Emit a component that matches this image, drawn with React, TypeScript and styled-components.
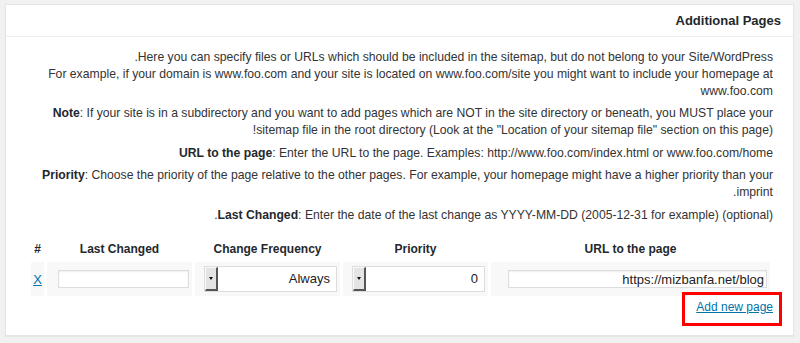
import styled, { createGlobalStyle } from "styled-components";

const GlobalStyle = createGlobalStyle`
  html, body {
    margin: 0;
    padding: 0;
    background: #f1f1f1;
    font-family: "Liberation Sans", Arial, sans-serif;
    color: #333;
  }
`;

const Page = styled.div`
  padding: 4px 6px 7px 5px;
`;

const Panel = styled.div`
  direction: rtl;
  background: #fff;
  border: 1px solid #e5e5e5;
  box-shadow: 0 1px 1px rgba(0, 0, 0, 0.04);
`;

const PanelTitle = styled.h3`
  margin: 0;
  padding: 0 12px;
  height: 31px;
  line-height: 31px;
  font-size: 13px;
  font-weight: bold;
  color: #23282d;
  border-bottom: 1px solid #eee;
`;

const PanelBody = styled.div`
  padding: 11.5px 20px 19px 22px;
`;

const Text = styled.p`
  margin: 0 0 5.5px;
  font-size: 12.2px;
  line-height: 17px;
  color: #333;

  strong {
    color: #23282d;
  }
`;

const PagesTable = styled.table`
  width: 745px;
  margin-top: 12.5px;
  table-layout: fixed;
  border-spacing: 3px;
`;

const HeadCell = styled.th`
  height: 20px;
  padding: 0;
  font-size: 12px;
  font-weight: bold;
  color: #23282d;
  text-align: center;
`;

const Cell = styled.td<{ $center?: boolean }>`
  height: 34px;
  padding: 0 ${(p) => (p.$center ? 0 : 3)}px 0 0;
  background: #f8f8f8;
  text-align: ${(p) => (p.$center ? "center" : "right")};
  vertical-align: middle;
  font-size: 13px;
`;

const TextInput = styled.input<{ $width: number }>`
  direction: rtl;
  box-sizing: border-box;
  width: ${(p) => p.$width}px;
  height: 18px;
  margin: 0;
  padding: 0 2px;
  border: 1px solid #ddd;
  box-shadow: inset 0 1px 2px rgba(0, 0, 0, 0.07);
  font-family: "Liberation Sans", Arial, sans-serif;
  font-size: 13px;
  color: #222;
  vertical-align: middle;
  outline: none;
`;

const SelectBox = styled.div`
  box-sizing: border-box;
  display: inline-flex;
  flex-direction: row-reverse;
  align-items: stretch;
  width: 133px;
  height: 26px;
  border: 1px solid #ddd;
  background: #fff;
  vertical-align: middle;
`;

const SelectArrow = styled.span`
  box-sizing: border-box;
  width: 13px;
  display: flex;
  align-items: center;
  justify-content: center;
  background: #e4e4e4;
  border-style: solid;
  border-width: 1px 2px 2px 1px;
  border-color: #fafafa #555 #555 #fafafa;

  &::before {
    content: "";
    border-left: 2.5px solid transparent;
    border-right: 2.5px solid transparent;
    border-top: 3px solid #111;
  }
`;

const SelectValue = styled.span`
  flex: 1;
  padding-right: 6px;
  line-height: 24px;
  font-size: 13px;
  color: #222;
  text-align: right;
`;

const Link = styled.a`
  color: #0073aa;
  text-decoration: underline;
  cursor: pointer;
`;

const RemoveLink = styled(Link)`
  font-size: 13px;
`;

const AddRow = styled.div`
  line-height: 17px;
  font-size: 12px;
`;

const Highlight = styled.span`
  position: relative;
  display: inline-block;

  &::after {
    content: "";
    position: absolute;
    top: -7px;
    bottom: -10px;
    left: -14px;
    right: -9px;
    border: 3px solid #ff0000;
    pointer-events: none;
  }
`;

function Select({ value }: { value: string }) {
  return (
    <SelectBox>
      <SelectArrow />
      <SelectValue>{value}</SelectValue>
    </SelectBox>
  );
}

export default function App() {
  return (
    <Page>
      <GlobalStyle />
      <Panel>
        <PanelTitle>Additional Pages</PanelTitle>
        <PanelBody>
          <Text>
            Here you can specify files or URLs which should be included in the
            sitemap, but do not belong to your Site/WordPress.
            <br />
            For example, if your domain is www.foo.com and your site is located
            on www.foo.com/site you might want to include your homepage at
            www.foo.com
          </Text>
          <Text>
            <strong>Note</strong>: If your site is in a subdirectory and you
            want to add pages which are NOT in the site directory or beneath,
            you MUST place your sitemap file in the root directory (Look at the
            "Location of your sitemap file" section on this page)!
          </Text>
          <Text>
            <strong>URL to the page</strong>: Enter the URL to the page.
            Examples: http://www.foo.com/index.html or www.foo.com/home
          </Text>
          <Text>
            <strong>Priority</strong>: Choose the priority of the page relative
            to the other pages. For example, your homepage might have a higher
            priority than your imprint.
          </Text>
          <Text>
            <strong>Last Changed</strong>: Enter the date of the last change as
            YYYY-MM-DD (2005-12-31 for example) (optional).
          </Text>

          <PagesTable>
            <colgroup>
              <col style={{ width: 279 }} />
              <col style={{ width: 145 }} />
              <col style={{ width: 145 }} />
              <col style={{ width: 145 }} />
              <col style={{ width: 13 }} />
            </colgroup>
            <thead>
              <tr>
                <HeadCell>URL to the page</HeadCell>
                <HeadCell>Priority</HeadCell>
                <HeadCell>Change Frequency</HeadCell>
                <HeadCell>Last Changed</HeadCell>
                <HeadCell>#</HeadCell>
              </tr>
            </thead>
            <tbody>
              <tr>
                <Cell>
                  <TextInput $width={259} defaultValue="https://mizbanfa.net/blog" />
                </Cell>
                <Cell>
                  <Select value="0" />
                </Cell>
                <Cell>
                  <Select value="Always" />
                </Cell>
                <Cell>
                  <TextInput $width={131} defaultValue="" />
                </Cell>
                <Cell $center>
                  <RemoveLink>X</RemoveLink>
                </Cell>
              </tr>
            </tbody>
          </PagesTable>

          <AddRow>
            <Highlight>
              <Link>Add new page</Link>
            </Highlight>
          </AddRow>
        </PanelBody>
      </Panel>
    </Page>
  );
}
